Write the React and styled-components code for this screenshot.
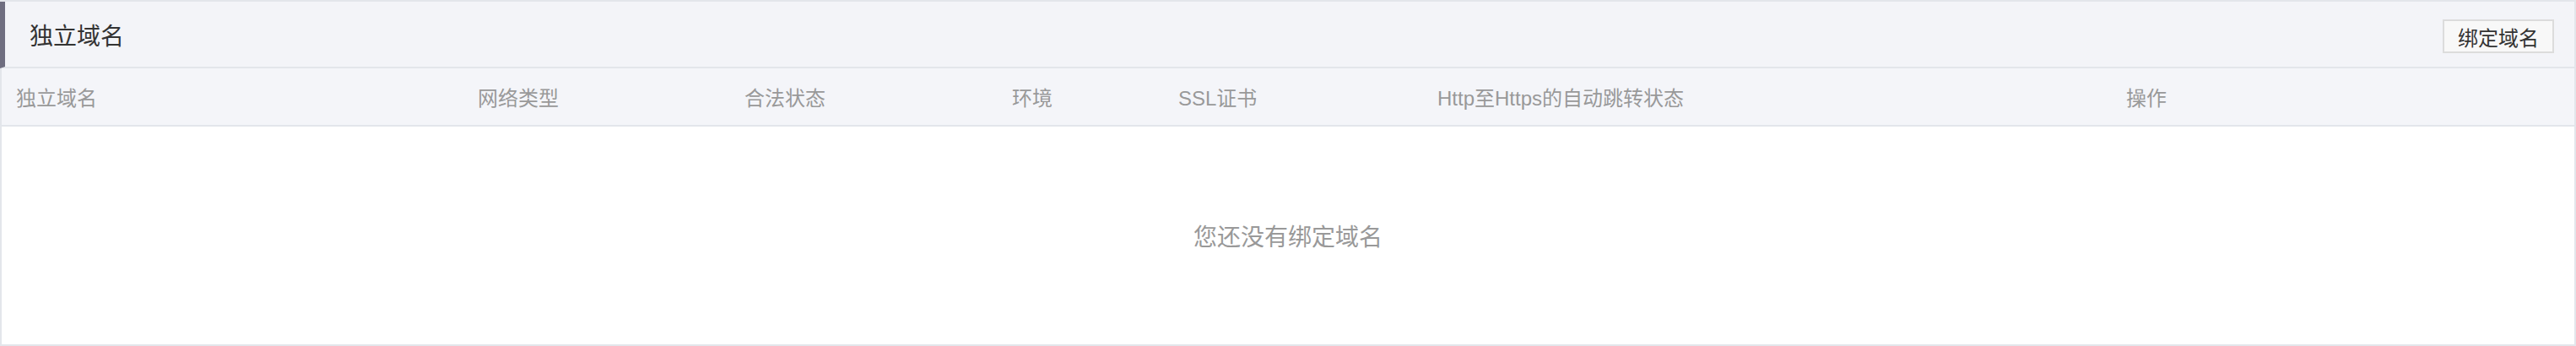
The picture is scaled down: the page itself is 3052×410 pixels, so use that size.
import React from 'react'
import styled, { createGlobalStyle } from 'styled-components'

const columns = [
  { title: '独立域名', width: '547px' },
  { title: '网络类型', width: '316px' },
  { title: '合法状态', width: '317px' },
  { title: '环境', width: '197px' },
  { title: 'SSL证书', width: '307px' },
  { title: 'Http至Https的自动跳转状态', width: '816px' },
  { title: '操作', width: '1fr' },
]

const App = () => (
  <>
    <GlobalStyle />
    <Panel>
      <Header>
        <Title>独立域名</Title>
        <BindButton type="button">绑定域名</BindButton>
      </Header>
      <HeadRow cols={columns.map(c => c.width).join(' ')}>
        {columns.map(({ title }) => (
          <HeadCell key={title}>{title}</HeadCell>
        ))}
      </HeadRow>
      <Empty>您还没有绑定域名</Empty>
    </Panel>
  </>
)

const GlobalStyle = createGlobalStyle`
  body {
    margin: 0;
    background: #fff;
    font-family: "Liberation Sans", "Noto Sans CJK SC", sans-serif;
  }
`

const Panel = styled.div`
  height: 410px;
  box-sizing: border-box;
  border: 2px solid #e3e6eb;
  display: flex;
  flex-direction: column;
`

const Header = styled.div`
  height: 79px;
  margin-left: -2px;
  box-sizing: border-box;
  display: flex;
  align-items: center;
  justify-content: space-between;
  padding: 0 24px 0 29px;
  background: #f3f4f8;
  border-left: 6px solid #6f6e80;
  border-bottom: 2px solid #e3e6eb;
`

const Title = styled.h3`
  margin: 0;
  font-size: 28px;
  font-weight: normal;
  color: #333;
`

const BindButton = styled.button`
  height: 40px;
  width: 132px;
  padding: 0;
  border: 2px solid #dcdcdc;
  background: #f8f8f8;
  font-family: inherit;
  font-size: 24px;
  color: #333;
  margin-top: 5px;
`

const HeadRow = styled.div`
  display: grid;
  grid-template-columns: ${ props => props.cols };
  height: 69px;
  box-sizing: border-box;
  align-items: center;
  background: #f4f5f9;
  border-bottom: 2px solid #e3e6eb;
`

const HeadCell = styled.div`
  padding-left: 17px;
  font-size: 24px;
  color: #999;
  white-space: nowrap;
`

const Empty = styled.div`
  flex: 1;
  display: flex;
  align-items: center;
  justify-content: center;
  font-size: 28px;
  color: #999;
  background: #fff;
`

export default App
